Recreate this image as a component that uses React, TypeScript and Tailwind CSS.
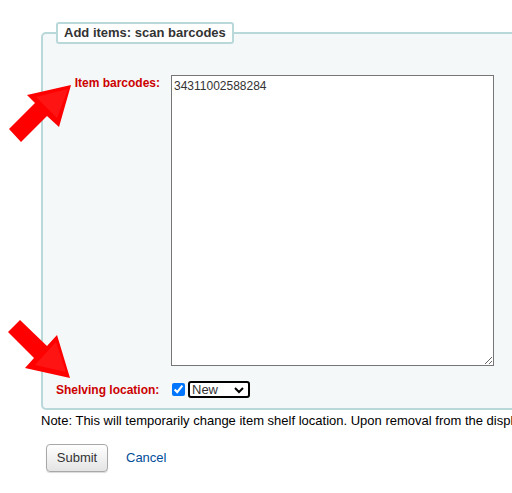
export default function App() {
    return (
        <main className="relative w-[512px] h-[493px] overflow-hidden bg-white pt-[22px] font-['Liberation_Sans',Arial,sans-serif] text-[#333]">
            <fieldset className="ml-[41px] w-[560px] border-2 border-[#b9d8d9] bg-[#f4f8f9] rounded-[5px] pl-[13px] pb-[10px]">
                <legend className="px-[6px] border-2 border-[#b9d8d9] bg-white rounded-[3px] text-[13px] leading-[18px] font-bold text-[#333]">
                    Add items: scan barcodes
                </legend>

                {/* Barcodes */}
                <div className="flex items-start mt-[31px]">
                    <label className="w-[104px] text-right text-[12px] leading-[16px] font-bold text-[#cc0000]">
                        Item barcodes:
                    </label>
                    <textarea
                        className="ml-[11px] w-[323px] h-[291px] border border-[#767676] bg-white px-[2px] pt-[3px] text-[12px] leading-[15px] text-[#333] font-['Liberation_Sans',Arial,sans-serif]"
                        defaultValue="34311002588284"
                    />
                </div>

                {/* Shelving location */}
                <div className="flex items-center mt-[15px] h-[17px]">
                    <label className="w-[102px] whitespace-nowrap text-right text-[12px] leading-[16px] font-bold text-[#cc0000]">
                        Shelving location:
                    </label>
                    <input type="checkbox" defaultChecked className="ml-[14px] m-0 w-[13px] h-[13px] accent-[#0075ff]" />
                    <div className="ml-[3px] relative w-[62px] h-[17px] border-2 border-black rounded-[3px] bg-white flex items-center">
                        <span className="pl-[2px] text-[13px] leading-[13px] text-[#333]">New</span>
                        <svg className="absolute right-[4px] top-[3px]" width="10" height="8" viewBox="0 0 10 8">
                            <path d="M1 2 L5 6 L9 2" fill="none" stroke="#000" strokeWidth="2" />
                        </svg>
                    </div>
                </div>
            </fieldset>

            <p className="ml-[41px] mt-[3px] whitespace-nowrap text-[13px] leading-[16px] text-[#000]">
                Note: This will temporarily change item shelf location. Upon removal from the display list, items will be returned to their permanent location.
            </p>

            <div className="ml-[46px] mt-[15px] flex items-center">
                <button className="w-[62px] h-[28px] rounded-[4px] border border-[#a8a8a8] bg-gradient-to-b from-white to-[#e4e4e4] text-[13px] text-[#333] shadow-[0_1px_1px_rgba(0,0,0,0.15)]">
                    Submit
                </button>
                <a href="#" className="ml-[18px] text-[13px] text-[#004d99]">
                    Cancel
                </a>
            </div>

            {/* Annotation arrows */}
            <svg className="absolute left-0 top-0 pointer-events-none" width="512" height="493" viewBox="0 0 512 493">
                <polygon points="71,85 27,95 35,103 9,129 21,142 47,116 59,127" fill="#ff0000" />
                <polygon points="68,89 36,97 57,118" fill="#ff1414" />
                <polygon points="20,320 47,346 57,335 70,378 25,368 34,358 8,332" fill="#ff0000" />
                <polygon points="56,342 66,372 35,365" fill="#ff1414" />
            </svg>
        </main>
    );
}
